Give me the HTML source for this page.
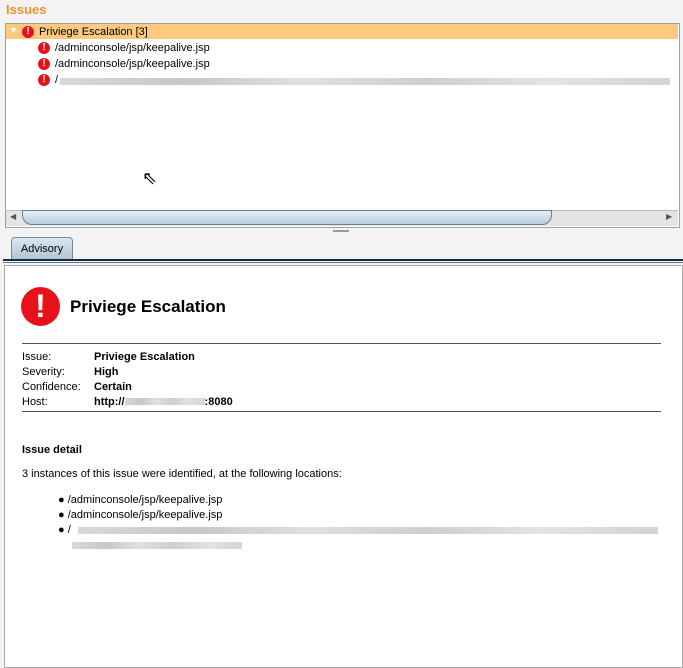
<!DOCTYPE html>
<html><head><style>
body{margin:0;width:683px;height:666px;background:#f3f3f3;font-family:"Liberation Sans",sans-serif;font-size:11px;position:relative;overflow:hidden}
.a{position:absolute}
.ic{display:inline-block;width:12px;height:12px;border-radius:50%;background:#e8101a;color:#fff;font-weight:bold;font-size:10px;line-height:12px;text-align:center}
.blur{background:linear-gradient(90deg,#cfcfcf,#b9b9b9 20%,#d8d8d8 40%,#c2c2c2 60%,#dcdcdc 80%,#c8c8c8);height:7px;display:inline-block;opacity:.8}
</style></head><body>
<div class="a" style="left:6px;top:2px;color:#e8942a;font-weight:bold;font-size:13px">Issues</div>
<div class="a" style="left:5px;top:23px;width:673px;height:203px;background:#fff;border:1px solid #a0a0a0"></div>
<div class="a" style="left:6px;top:24px;width:672px;height:15px;background:#fcc97e"></div>
<div class="a" style="left:9px;top:25px;color:#fff;font-size:9px">▼</div>
<div class="a" style="left:22px;top:25px"><span class="ic">!</span></div>
<div class="a" style="left:39px;top:26px">Priviege Escalation [3]</div>
<div class="a" style="left:38px;top:41px"><span class="ic">!</span></div>
<div class="a" style="left:55px;top:42px">/adminconsole/jsp/keepalive.jsp</div>
<div class="a" style="left:38px;top:57px"><span class="ic">!</span></div>
<div class="a" style="left:55px;top:58px">/adminconsole/jsp/keepalive.jsp</div>
<div class="a" style="left:38px;top:73px"><span class="ic">!</span></div>
<div class="a" style="left:55px;top:74px">/</div>
<div class="a blur" style="left:60px;top:78px;width:610px"></div>
<div class="a" style="left:142px;top:168px;font-size:18px">⇖</div>
<div class="a" style="left:6px;top:210px;width:672px;height:15px;background:#e4e4e4;border-top:1px solid #bbb"></div>
<div class="a" style="left:10px;top:212px;font-size:8px;color:#555">◀</div>
<div class="a" style="left:666px;top:212px;font-size:8px;color:#555">▶</div>
<div class="a" style="left:22px;top:210px;width:528px;height:13px;border:1px solid #6a8090;border-radius:0 0 10px 10px;background:linear-gradient(#e6eef4,#b8cedc)"></div>
<div class="a" style="left:333px;top:230px;width:16px;height:2px;background:#999"></div>
<div class="a" style="left:11px;top:237px;width:60px;height:22px;border:1px solid #7a8a98;border-bottom:none;border-radius:4px 4px 0 0;background:linear-gradient(#dbe6ee,#aec4d4);text-align:center;line-height:22px">Advisory</div>
<div class="a" style="left:3px;top:259px;width:680px;height:2px;background:#1a2a40"></div>
<div class="a" style="left:3px;top:262px;width:680px;height:1px;background:#5b7896"></div>
<div class="a" style="left:4px;top:265px;width:677px;height:401px;background:#fff;border:1px solid #aaa"></div>
<div class="a" style="left:21px;top:287px;width:39px;height:39px;border-radius:50%;background:#e8101a;color:#fff;font-weight:bold;font-size:32px;line-height:39px;text-align:center">!</div>
<div class="a" style="left:70px;top:297px;font-weight:bold;font-size:17px">Priviege Escalation</div>
<div class="a" style="left:22px;top:343px;width:639px;height:1px;background:#555"></div>
<div class="a" style="left:22px;top:350px;line-height:15px">Issue:<br>Severity:<br>Confidence:<br>Host:</div>
<div class="a" style="left:94px;top:350px;line-height:15px;font-weight:bold">Priviege Escalation<br>High<br>Certain<br>http://<span class="blur" style="width:80px"></span>:8080</div>
<div class="a" style="left:22px;top:411px;width:639px;height:1px;background:#555"></div>
<div class="a" style="left:22px;top:444px;font-weight:bold">Issue detail</div>
<div class="a" style="left:22px;top:468px">3 instances of this issue were identified, at the following locations:</div>
<div class="a" style="left:58px;top:493px;line-height:15px">● /adminconsole/jsp/keepalive.jsp<br>● /adminconsole/jsp/keepalive.jsp<br>● /</div>
<div class="a blur" style="left:78px;top:527px;width:580px"></div>
<div class="a blur" style="left:72px;top:542px;width:170px"></div>
</body></html>
